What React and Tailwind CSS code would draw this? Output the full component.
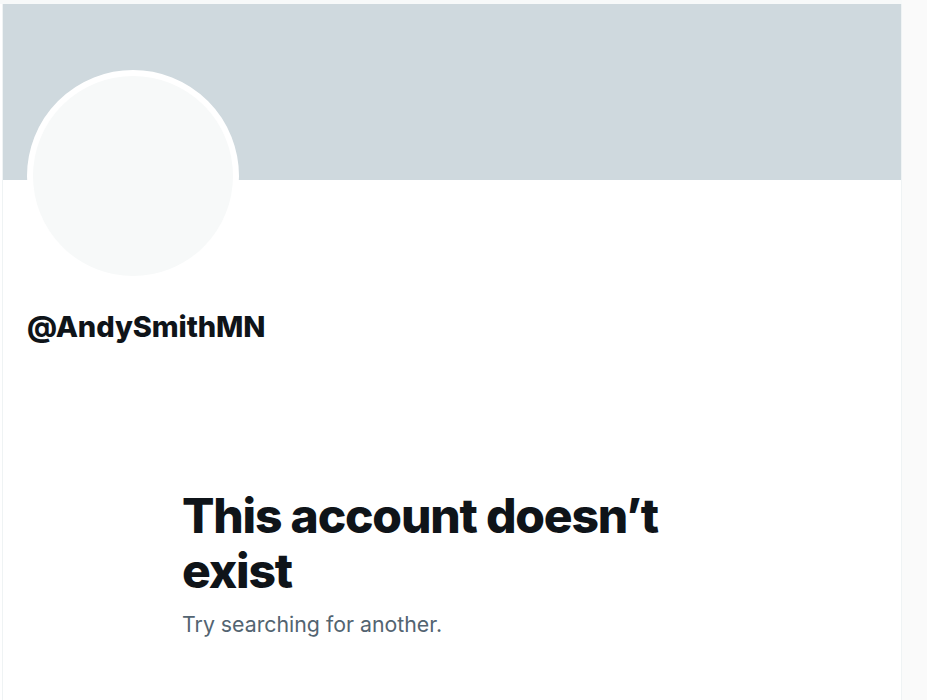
export default function App() {
  return (
    <div className="flex w-[927px] h-[700px] bg-[#fafafa] overflow-hidden" style={{ fontFamily: 'Inter, "Liberation Sans", sans-serif' }}>
      <div className="flex flex-col w-[902px] h-full bg-white">
        <div className="h-[4px] bg-[#f7f9f9]" />
        <div className="flex-1 ml-[2px] border-l border-r border-[#eff3f4] flex flex-col">
          <div className="h-[176px] bg-[#cfd9de]" />
          <div className="px-[24px]">
            <div className="-mt-[110px] w-[212px] h-[212px] rounded-full border-[6px] border-white bg-[#f7f9f9]" />
            <div className="mt-[27px] text-[29px] leading-[36px] font-extrabold text-[#0f1419] tracking-[-0.1px]">@AndySmithMN</div>
          </div>
          <div className="w-[540px] mx-auto mt-[143px]">
            <h1 className="text-[48px] leading-[55px] font-extrabold text-[#0f1419] tracking-tight">This account doesn’t exist</h1>
            <p className="mt-[12px] text-[21.3px] leading-[28px] text-[#536471]">Try searching for another.</p>
          </div>
        </div>
      </div>
    </div>
  );
}
